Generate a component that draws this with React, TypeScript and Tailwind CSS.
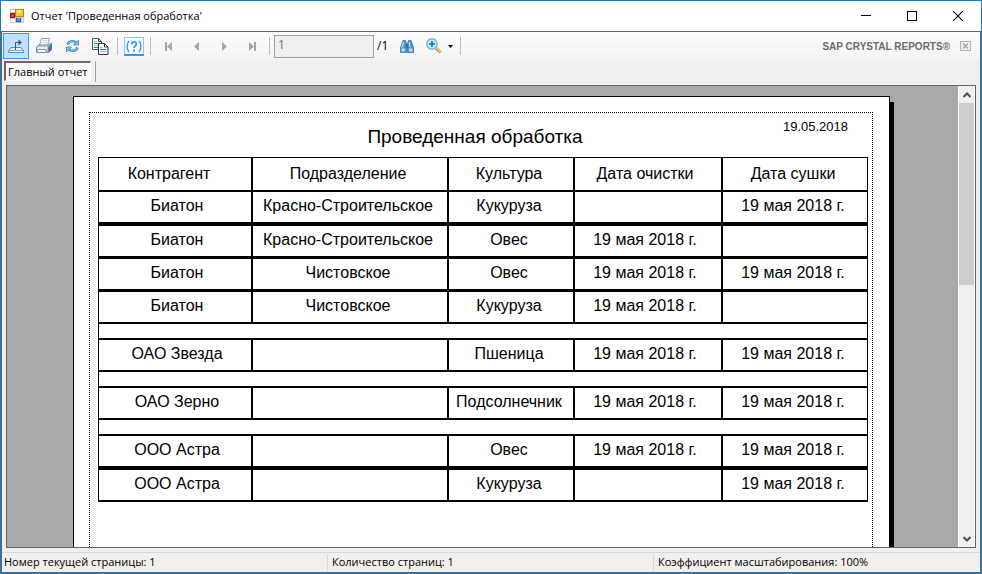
import type { ReactNode } from "react";

type Row = { cells: [string, string, string, string, string]; rule: string } | null;

const RULE_2 = "border-b-2 h-8";
const RULE_3 = "border-b-3 h-[33px]";
const RULE_4 = "border-b-4 h-[34px]";

const DATE = "19 мая 2018 г.";

const rows: Row[] = [
  { cells: ["Биатон", "Красно-Строительское", "Кукуруза", "", DATE], rule: RULE_4 },
  { cells: ["Биатон", "Красно-Строительское", "Овес", DATE, ""], rule: RULE_3 },
  { cells: ["Биатон", "Чистовское", "Овес", DATE, DATE], rule: RULE_3 },
  { cells: ["Биатон", "Чистовское", "Кукуруза", DATE, ""], rule: RULE_2 },
  null,
  { cells: ["ОАО Звезда", "", "Пшеница", DATE, DATE], rule: RULE_2 },
  null,
  { cells: ["ОАО Зерно", "", "Подсолнечник", DATE, DATE], rule: RULE_2 },
  null,
  { cells: ["ООО Астра", "", "Овес", DATE, DATE], rule: RULE_4 },
  { cells: ["ООО Астра", "", "Кукуруза", "", DATE], rule: RULE_2 },
];

const headers = ["Контрагент", "Подразделение", "Культура", "Дата очистки", "Дата сушки"];

const columnEdge = [
  "border-l border-r-2 pr-3",
  "border-r-2 pr-1",
  "border-r-2 pr-1",
  "border-r-2 pr-1.5",
  "border-r pr-1",
];

function ToolButton({
  label,
  className = "w-[26px]",
  disabled,
  children,
}: {
  label: string;
  className?: string;
  disabled?: boolean;
  children: ReactNode;
}) {
  return (
    <button
      type="button"
      aria-label={label}
      disabled={disabled}
      className={`flex h-[26px] shrink-0 items-center justify-center ${className}`}
    >
      {children}
    </button>
  );
}

function Separator() {
  return <div className="mx-0.5 h-[18px] w-px shrink-0 bg-[#bdbdbd]" />;
}

function AppIcon() {
  return (
    <svg width="14" height="14" viewBox="0 0 14 14" shapeRendering="crispEdges" aria-hidden="true">
      <rect width="14" height="14" fill="#c8c8c8" />
      <rect x="1" y="1" width="4" height="2" fill="#fff" />
      <rect x="1" y="10" width="4" height="3" fill="#fff" />
      <rect x="12" y="9" width="1" height="4" fill="#fff" />
      <rect x="5" y="0" width="9" height="8" fill="#b8860b" />
      <rect x="6" y="1" width="7" height="6" fill="#fbc936" />
      <rect x="7" y="1" width="4" height="3" fill="#ffe283" />
      <rect x="0" y="4" width="5" height="5" fill="#8d1c12" />
      <rect x="1" y="5" width="3" height="3" fill="#d2473a" />
      <rect x="6" y="9" width="5" height="4" fill="#2956b8" />
      <rect x="7" y="9" width="3" height="3" fill="#5c94ee" />
    </svg>
  );
}

function ExportIcon() {
  return (
    <svg width="18" height="16" viewBox="0 0 18 16" fill="none" aria-hidden="true">
      <path d="M4 9.500h10l2.500 3.500v1.500h-15V13z" fill="#eef6fd" stroke="#4a90c4" />
      <path d="M2 12.500h14" stroke="#7db0d6" />
      <path d="M8.500 12V4.500h4" stroke="#2b5f8c" />
      <path d="M11.500 1.500l3.500 3-3.500 3z" fill="#2b5f8c" />
    </svg>
  );
}

function PrinterIcon() {
  return (
    <svg width="17" height="16" viewBox="0 0 17 16" fill="none" aria-hidden="true">
      <path d="M5.500 .5h8l-2 7h-8z" fill="#fff" stroke="#8ba3b8" />
      <path d="M6.500 2.500h5M6 4.500h5" stroke="#c3d3e0" />
      <path d="M3 7h9l3.500-2v6.500l-3 3H1l-.5-1V9z" fill="#b4c6d6" stroke="#6f8ba2" />
      <path d="M1.500 9h9.500v3H1.500z" fill="#e6eef5" />
      <path d="M2 11.500h8v3H1z" fill="#fff" stroke="#7f97ab" />
      <path d="M12 8.500l4-2.500v5.500l-3.500 3.500z" fill="#3d76a5" />
      <rect x="12" y="8" width="2" height="2" fill="#3fae49" />
      <rect x="13" y="11" width="2" height="2" fill="#d04531" />
    </svg>
  );
}

function RefreshIcon() {
  return (
    <svg width="15" height="14" viewBox="0 0 15 14" fill="none" aria-hidden="true">
      <path d="M2.500 5.500C3.500 3.300 5.500 2.300 7.500 2.300c1.500 0 2.700.5 3.700 1.500" stroke="#3489bd" strokeWidth="2.600" />
      <path d="M3 5C4 3.300 5.800 2.500 7.500 2.500c1.300 0 2.400.4 3.300 1.300" stroke="#a6def5" />
      <path d="M13.500 1v5H8.500z" fill="#7cc7ea" stroke="#3489bd" strokeWidth=".8" />
      <path d="M12.500 8.500c-1 2.200-3 3.200-5 3.200-1.500 0-2.700-.5-3.700-1.500" stroke="#3489bd" strokeWidth="2.600" />
      <path d="M12 9c-1 1.700-2.800 2.500-4.500 2.500-1.300 0-2.400-.4-3.300-1.300" stroke="#a6def5" />
      <path d="M1.500 13V8h5z" fill="#7cc7ea" stroke="#3489bd" strokeWidth=".8" />
    </svg>
  );
}

function CopyIcon() {
  return (
    <svg width="17" height="17" viewBox="0 0 17 17" fill="none" aria-hidden="true">
      <path d="M.5.5h6l3 3v8h-9z" fill="#fff" stroke="#555" />
      <path d="M6.500.5v3h3" stroke="#333" />
      <path d="M2 3.500h3M2 7.500h5" stroke="#8cc6ea" />
      <path d="M2 5.500h5M2 9.500h5" stroke="#2179b5" />
      <path d="M6.500 5.500h6l3.500 3.500v7.500h-9.500z" fill="#fff" stroke="#333" />
      <path d="M12.500 5.500v3.500h3.500" stroke="#333" />
      <path d="M8 9.500h3M8 13.500h6.500" stroke="#8cc6ea" />
      <path d="M8 11.500h6.500" stroke="#2179b5" />
    </svg>
  );
}

function HelpIcon() {
  return (
    <svg width="20" height="19" viewBox="0 0 20 19" fill="none" aria-hidden="true">
      <rect x=".5" y=".5" width="19" height="18" fill="#f4faff" stroke="#8cc8fa" />
      <path d="M0 18h20" stroke="#3399ff" strokeWidth="2" />
      <path d="M5 4C2.500 7 2.500 12 5 15M15 4c2.500 3 2.500 8 0 11" stroke="#3399ff" strokeWidth="1.300" />
      <path d="M7.800 7.200c0-3 4.600-3 4.600-.2 0 1.800-2.300 1.800-2.300 4" stroke="#3399ff" strokeWidth="1.800" />
      <rect x="9" y="12.500" width="2" height="2" fill="#3399ff" />
    </svg>
  );
}

function BinocularsIcon() {
  return (
    <svg width="14" height="13" viewBox="0 0 14 13" aria-hidden="true">
      <path d="M3 .5h2.500L6.500 4v8.500h-6V7.500z" fill="#4c9bd0" stroke="#2f74aa" strokeWidth=".8" />
      <path d="M11 .5H8.500L7.500 4v8.500h6V7.500z" fill="#4c9bd0" stroke="#2f74aa" strokeWidth=".8" />
      <path d="M5.500 4h3v4h-3z" fill="#2f74aa" />
      <path d="M3.500 2L2 7.500M9.500 2v5" stroke="#b5e0f7" strokeWidth="1.200" />
      <path d="M1.500 8.500h3.500v3H1.500zM9 8.500h3.500v3H9z" fill="#b5daf2" />
    </svg>
  );
}

function ZoomIcon() {
  return (
    <svg width="16" height="16" viewBox="0 0 16 16" fill="none" aria-hidden="true">
      <path d="M10 10l4.500 4.500" stroke="#c98738" strokeWidth="3" />
      <path d="M10.500 10l4 4" stroke="#fbc98a" strokeWidth="1.400" />
      <circle cx="6" cy="6" r="5.200" fill="#c8eafc" stroke="#6db8ea" strokeWidth="1.400" />
      <path d="M6 3v6M3 6h6" stroke="#1d6aa8" strokeWidth="1.600" />
    </svg>
  );
}

function TitleBar() {
  return (
    <header className="flex h-[30px] shrink-0 items-center bg-white pl-[9px] text-black">
      <AppIcon />
      <h1 className="ml-[7px] flex-1 text-[11px]">Отчет 'Проведенная обработка'</h1>
      <button type="button" aria-label="Свернуть" className="flex h-full w-[46px] items-center justify-center">
        <svg width="10" height="10" aria-hidden="true">
          <path d="M0 4.500h10" stroke="#000" />
        </svg>
      </button>
      <button type="button" aria-label="Развернуть" className="flex h-full w-[46px] items-center justify-center">
        <svg width="10" height="10" fill="none" aria-hidden="true">
          <rect x=".5" y=".5" width="9" height="9" stroke="#000" />
        </svg>
      </button>
      <button type="button" aria-label="Закрыть" className="flex h-full w-[46px] items-center justify-center">
        <svg width="10" height="10" aria-hidden="true">
          <path d="M0 0l10 10M10 0L0 10" stroke="#000" strokeWidth="1.100" />
        </svg>
      </button>
    </header>
  );
}

function Toolbar() {
  return (
    <div className="flex h-7 shrink-0 items-center gap-0.5 bg-linear-to-b from-[#fdfdfd] to-[#f3f3f3] pr-[9px] pl-px">
      <ToolButton label="Экспорт отчета" className="w-[26px] border border-[#3399ff] bg-[#c2e0ff]">
        <ExportIcon />
      </ToolButton>
      <ToolButton label="Печать">
        <PrinterIcon />
      </ToolButton>
      <ToolButton label="Обновить">
        <RefreshIcon />
      </ToolButton>
      <ToolButton label="Копировать">
        <CopyIcon />
      </ToolButton>
      <Separator />
      <ToolButton label="Справка" className="w-6">
        <HelpIcon />
      </ToolButton>
      <Separator />
      <ToolButton label="Первая страница" disabled>
        <svg width="7" height="9" fill="#a6a6a6" aria-hidden="true">
          <path d="M0 0h2v9H0zM7 0v9L2 4.500z" />
        </svg>
      </ToolButton>
      <ToolButton label="Предыдущая страница" disabled>
        <svg width="5" height="9" fill="#a6a6a6" aria-hidden="true">
          <path d="M5 0v9L0 4.500z" />
        </svg>
      </ToolButton>
      <ToolButton label="Следующая страница" disabled>
        <svg width="5" height="9" fill="#a6a6a6" aria-hidden="true">
          <path d="M0 0v9l5-4.500z" />
        </svg>
      </ToolButton>
      <ToolButton label="Последняя страница" disabled>
        <svg width="7" height="9" fill="#a6a6a6" aria-hidden="true">
          <path d="M5 0h2v9H5zM0 0v9l5-4.500z" />
        </svg>
      </ToolButton>
      <Separator />
      <input
        aria-label="Номер страницы"
        defaultValue="1"
        disabled
        className="h-[23px] w-25 shrink-0 border border-[#a0a0a0] bg-[#f0f0f0] px-[3px] pb-1 text-[12px] text-[#6d6d6d]"
      />
      <span className="w-4 shrink-0 pl-px text-[12px]">/1</span>
      <ToolButton label="Найти">
        <BinocularsIcon />
      </ToolButton>
      <ToolButton label="Масштаб" className="w-[34px] gap-1.5">
        <ZoomIcon />
        <svg width="5" height="3" aria-hidden="true">
          <path d="M0 0h5L2.500 3z" fill="#000" />
        </svg>
      </ToolButton>
      <Separator />
      <div className="flex-1" />
      <span className="pt-0.5 font-['Liberation_Sans',Arial,sans-serif] text-[10px] font-bold whitespace-nowrap text-[#6b6b6b]">
        SAP CRYSTAL REPORTS®
      </span>
      <button type="button" aria-label="Закрыть вид" className="ml-2 shrink-0">
        <svg width="11" height="10" fill="none" aria-hidden="true">
          <rect x=".5" y=".5" width="10" height="9" fill="#f2f2f2" stroke="#b4b4b4" />
          <path d="M3 2.500l5 5M8 2.500l-5 5" stroke="#a0a0a0" strokeWidth="1.300" />
        </svg>
      </button>
    </div>
  );
}

function ReportTable() {
  return (
    <table className="w-full table-fixed border-separate border-spacing-0 border-black text-center text-base leading-5">
      <colgroup>
        <col className="w-[155px]" />
        <col className="w-[196px]" />
        <col className="w-[126px]" />
        <col className="w-[148px]" />
        <col className="w-[145px]" />
      </colgroup>
      <thead>
        <tr>
          {headers.map((h, i) => (
            <th key={h} className={`h-[35px] border-t border-b-2 border-black p-0 font-normal ${columnEdge[i]}`}>
              {h}
            </th>
          ))}
        </tr>
      </thead>
      <tbody>
        {rows.map((row, r) =>
          row ? (
            <tr key={r}>
              {row.cells.map((c, i) => (
                <td
                  key={i}
                  className={`border-black p-0 pb-0.5 whitespace-nowrap ${row.rule} ${
                    i === 0 ? "border-l border-r-2 pl-1" : columnEdge[i]
                  }`}
                >
                  {c}
                </td>
              ))}
            </tr>
          ) : (
            <tr key={r}>
              <td colSpan={5} className="h-4 border-x border-b-2 border-black p-0" />
            </tr>
          ),
        )}
      </tbody>
    </table>
  );
}

function ReportPage() {
  return (
    <article className="h-[1155px] w-[817px] shrink-0 border border-black bg-white p-[15px] pr-4 font-['Liberation_Sans',Arial,sans-serif] text-black shadow-[4px_6px_0_0_#000]">
      <div className="h-full border border-dotted border-black pr-1 pl-2">
        <div className="grid h-11 grid-cols-[1fr_auto_1fr] items-start">
          <h2 className="col-start-2 pt-3 pr-4 text-[19px] leading-6">Проведенная обработка</h2>
          <time dateTime="2018-05-19" className="justify-self-end pt-1 pr-5 text-[13px] leading-5">
            19.05.2018
          </time>
        </div>
        <ReportTable />
      </div>
    </article>
  );
}

function ScrollBar() {
  return (
    <div className="flex w-[17px] shrink-0 flex-col border-x border-white bg-[#f0f0f0]">
      <button type="button" aria-label="Прокрутить вверх" className="flex h-[17px] items-center justify-center">
        <svg width="8" height="6" fill="none" aria-hidden="true">
          <path d="M.5 5L4 1.500 7.500 5" stroke="#505050" strokeWidth="2" />
        </svg>
      </button>
      <div className="h-[182px] bg-[#cdcdcd]" />
      <div className="flex-1" />
      <button type="button" aria-label="Прокрутить вниз" className="flex h-[17px] items-center justify-center">
        <svg width="8" height="6" fill="none" aria-hidden="true">
          <path d="M.5 1L4 4.500 7.500 1" stroke="#505050" strokeWidth="2" />
        </svg>
      </button>
    </div>
  );
}

export default function App() {
  return (
    <div className="flex h-screen flex-col overflow-hidden border border-[#1979ca] bg-[#f0f0f0] font-['Open_Sans','Noto_Sans',sans-serif] text-[12px] leading-4 text-black">
      <TitleBar />
      <div className="flex min-h-0 flex-1 flex-col border border-[#646464]">
        <Toolbar />
        <div role="tablist" className="flex h-[25px] shrink-0 items-start gap-1 pt-px pl-0.5">
          <button
            type="button"
            role="tab"
            aria-selected="true"
            className="h-5 border-t-2 border-r border-b border-l-2 border-t-[#696969] border-r-white border-b-white border-l-[#696969] bg-[#f8f8f8] px-0.5 text-[11px] leading-4"
          >
            Главный отчет
          </button>
          <div className="h-[21px] w-px bg-[#a0a0a0]" />
        </div>
        <main className="mr-1 ml-1 flex min-h-0 flex-1 border border-[#646464] bg-[#a9a9a9]">
          <div className="flex min-w-0 flex-1 justify-center overflow-hidden pt-2.5 pr-0.5">
            <ReportPage />
          </div>
          <ScrollBar />
        </main>
        <footer className="mt-1 grid h-5 shrink-0 grid-cols-3 border-t border-[#d7d7d7] text-[11px] leading-4">
          <div className="my-px border-r border-[#d7d7d7] pl-0.5">Номер текущей страницы: 1</div>
          <div className="my-px border-r border-[#d7d7d7] pl-1">Количество страниц: 1</div>
          <div className="my-px pl-1">Коэффициент масштабирования: 100%</div>
        </footer>
      </div>
    </div>
  );
}
